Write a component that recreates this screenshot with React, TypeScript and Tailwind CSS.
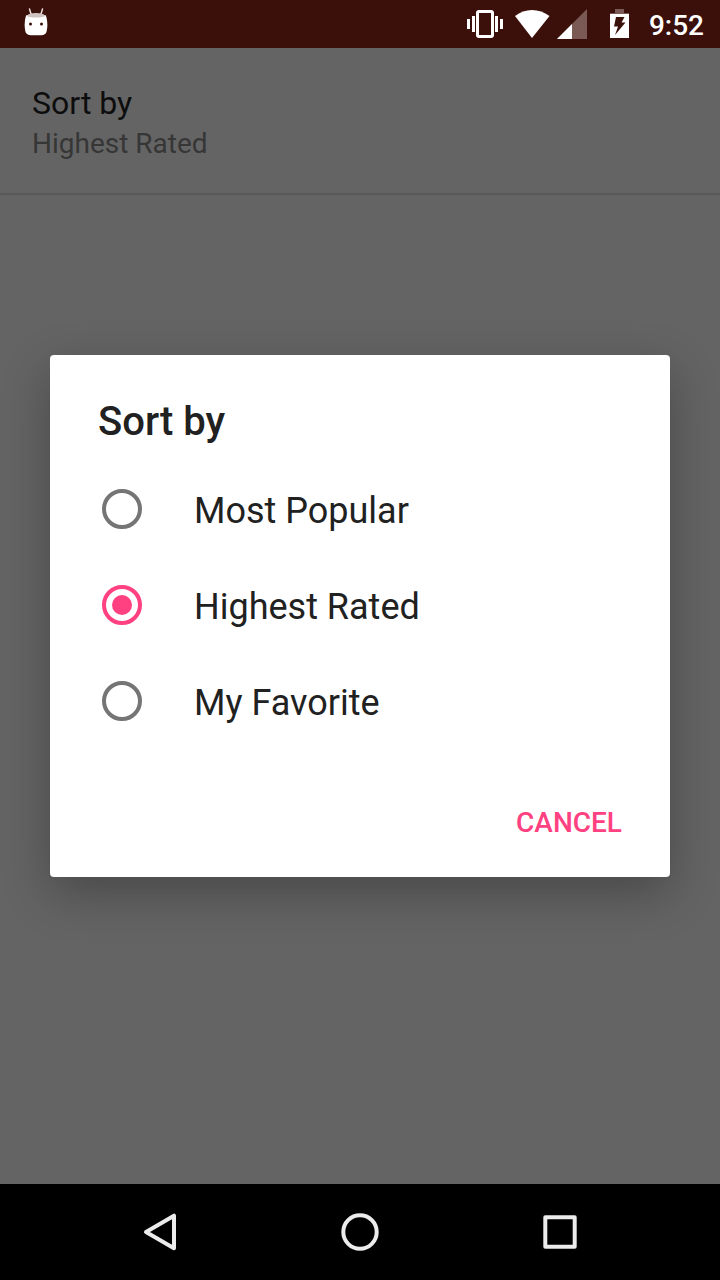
import { useState } from 'react';

const OPTIONS = ['Most Popular', 'Highest Rated', 'My Favorite'];

function StatusBar() {
  return (
    <header className="flex h-12 shrink-0 items-center justify-between bg-[#3b0f0a] pr-4 pl-6 text-white">
      <svg className="h-12 w-6" viewBox="0 0 24 48" aria-hidden="true">
        <path d="M5.500 9 7 14M18.500 9 17 14" stroke="#e8dcda" strokeWidth="1.500" strokeLinecap="round" />
        <path d="M2 15.500Q12 11 22 15.500Q24.500 24 22.500 32Q21.500 35 17 35.300H7Q2.500 35 1.500 32Q-.5 24 2 15.500Z" fill="#fff" />
        <path d="M2.500 15.500Q12 11 21.500 15.500Q20 17.500 12 17.500T2.500 15.500Z" fill="#d0c2c0" />
        <circle cx="6.500" cy="24" r="1.500" fill="#3b0f0a" />
        <circle cx="17.500" cy="24" r="1.500" fill="#3b0f0a" />
      </svg>
      <div className="flex items-center">
        <svg className="h-12 w-9" viewBox="0 0 36 48" fill="none" aria-hidden="true">
          <rect x="10.500" y="11.500" width="15" height="25" rx="1.500" stroke="currentColor" strokeWidth="3" />
          <path d="M0 19h3v10H0zM5 16h3v16H5zM28 16h3v16h-3zM33 19h3v10h-3z" fill="currentColor" />
        </svg>
        <svg className="ml-3 h-12 w-9" viewBox="0 0 36 48" aria-hidden="true">
          <path d="M0 16Q7.500 10 17 10T34.500 16L17 38Z" fill="currentColor" />
        </svg>
        <svg className="ml-1.5 h-12 w-8" viewBox="0 0 32 48" aria-hidden="true">
          <path d="M0 39 30 9V39Z" fill="#7b5a56" />
          <path d="M0 39 15 24V39Z" fill="currentColor" />
        </svg>
        <svg className="ml-5 h-12 w-5" viewBox="0 0 20 48" aria-hidden="true">
          <path d="M6 9h9v4h5v3H1v-3h5z" fill="#7b5a56" />
          <path d="M1 14h19v24H1z" fill="currentColor" />
          <path d="M7 17H15.500L12.500 22.500H16.500L6 35L9 26.500H5Z" fill="#3b0f0a" />
        </svg>
        <time className="ml-5 pt-1 text-[28px] leading-8 font-medium">9:52</time>
      </div>
    </header>
  );
}

function NavigationBar() {
  return (
    <nav className="flex h-24 shrink-0 items-center justify-center gap-26 bg-black text-[#ececec]">
      <button type="button" aria-label="Back" className="h-24 w-24">
        <svg className="size-24" viewBox="0 0 96 96" fill="none" stroke="currentColor" strokeWidth="4" strokeLinejoin="round" aria-hidden="true">
          <path d="M34 48 62 31.700V64.300Z" />
        </svg>
      </button>
      <button type="button" aria-label="Home" className="h-24 w-24">
        <svg className="size-24" viewBox="0 0 96 96" fill="none" stroke="currentColor" strokeWidth="4" aria-hidden="true">
          <circle cx="48" cy="48" r="16.700" />
        </svg>
      </button>
      <button type="button" aria-label="Overview" className="h-24 w-24">
        <svg className="size-24" viewBox="0 0 96 96" fill="none" stroke="currentColor" strokeWidth="4" strokeLinejoin="round" aria-hidden="true">
          <rect x="33.300" y="33.300" width="29.400" height="29.400" />
        </svg>
      </button>
    </nav>
  );
}

export default function App() {
  const [selected, setSelected] = useState('Highest Rated');

  return (
    <div className="flex min-h-screen flex-col bg-[#646464] font-['Roboto',sans-serif]">
      <StatusBar />
      <main className="grid flex-1">
        <section className="col-start-1 row-start-1">
          <div className="border-b-2 border-[#585858] px-8 pt-9 pb-[31px]">
            <h1 className="text-[32px] leading-[38px] text-[#0d0d0d]">Sort by</h1>
            <p className="mt-1 text-[28px] leading-9 text-[#363636]">{selected}</p>
          </div>
        </section>
        <form
          role="dialog"
          aria-labelledby="dialog-title"
          className="col-start-1 row-start-1 mx-[50px] self-center rounded bg-white text-[#212121] shadow-[0_16px_48px_rgba(0,0,0,0.28)]"
        >
          <h2 id="dialog-title" className="px-12 pt-10 pb-3 text-[40px] leading-[54px] font-medium">
            Sort by
          </h2>
          {OPTIONS.map((option) => (
            <label key={option} className="flex h-24 items-center gap-13 px-13 text-[36px] leading-12">
              <input
                type="radio"
                name="sort"
                value={option}
                checked={selected === option}
                onChange={() => setSelected(option)}
                className="grid size-10 shrink-0 appearance-none place-items-center rounded-full border-4 border-[#757575] before:size-5 before:rounded-full checked:border-[#ff4081] checked:before:bg-[#ff4081]"
              />
              <span className="pt-1">{option}</span>
            </label>
          ))}
          <div className="flex justify-end px-8 pt-8 pb-3">
            <button type="button" className="h-21 px-4 text-[28px] leading-9 font-medium text-[#ff4081] uppercase">
              Cancel
            </button>
          </div>
        </form>
      </main>
      <NavigationBar />
    </div>
  );
}
